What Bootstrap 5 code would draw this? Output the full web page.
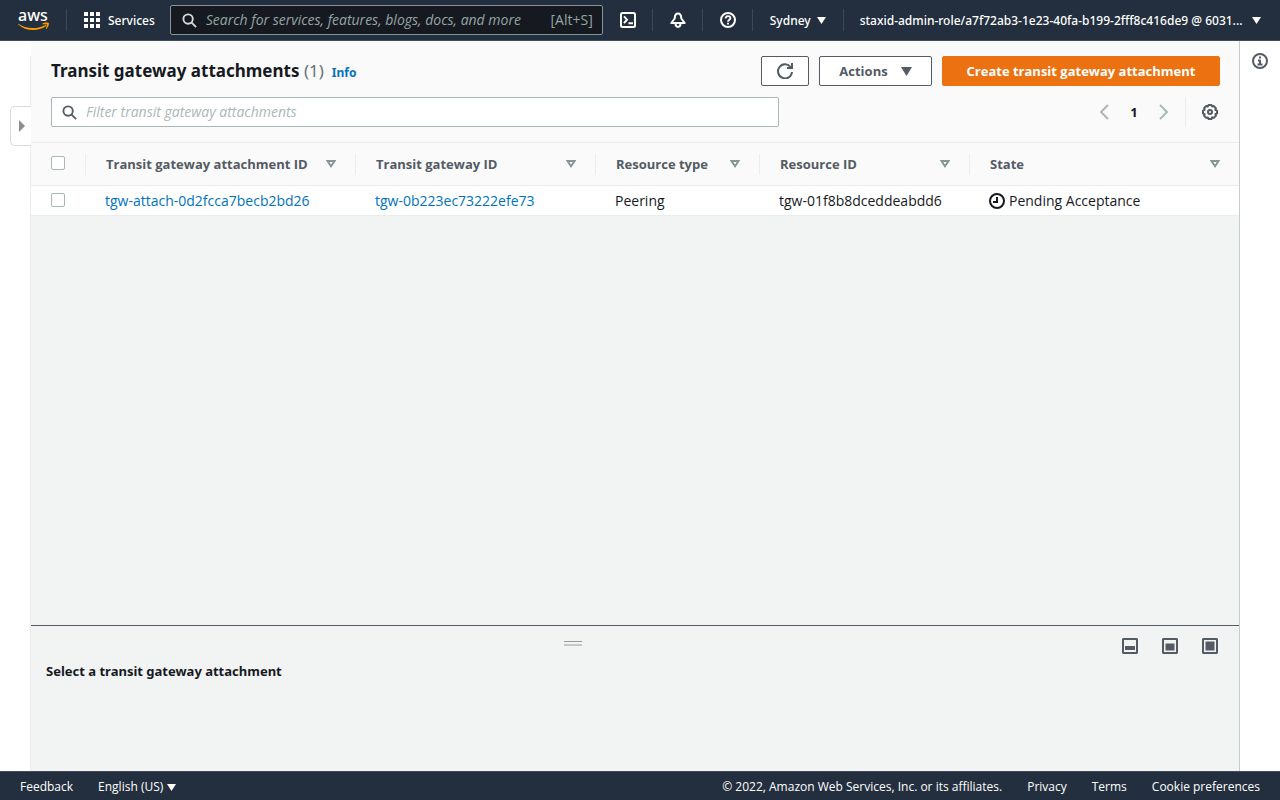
<!DOCTYPE html>
<html lang="en">
<head>
<meta charset="utf-8">
<meta name="viewport" content="width=device-width, initial-scale=1">
<title>Transit gateway attachments</title>
<link rel="stylesheet" href="https://cdn.jsdelivr.net/npm/bootstrap@5.3.0/dist/css/bootstrap.min.css">
<script src="https://cdn.jsdelivr.net/npm/bootstrap@5.3.0/dist/js/bootstrap.bundle.min.js" defer></script>
<style>
  :root { --ink: #16191f; --slate: #545b64; --line: #eaeded; --navy: #232f3e; --blue: #0073bb; }
  body { font-family: "Open Sans", "Noto Sans", sans-serif; font-size: 14px; line-height: 20px; color: var(--ink); background: #fff; }
  svg { display: block; flex: none; }
  a { text-decoration: none; }
  button { font: inherit; }
  .plain-btn { background: none; border: 0; padding: 0; color: inherit; display: flex; align-items: center; }

  .top-bar { height: 41px; background: var(--navy); border-bottom: 1px solid #414d5c; color: #fff; font-family: "Noto Sans", sans-serif; font-size: 12px; font-weight: 500; }
  .top-bar .divider { width: 1px; height: 22px; background: #414750; flex: none; }
  .top-bar .icon-cell { width: 49px; padding-left: 1px; justify-content: center; }
  .top-bar .plain-btn > span { padding-top: 2px; }
  .services-btn { margin: 0 15px 0 17px; gap: 8px; }
  .search-box { width: 433px; height: 30px; background: var(--ink); border: 1px solid #879596; border-radius: 2px; color: #95a5a6; padding: 0 9px 0 11px; font-family: "Open Sans", sans-serif; font-size: 14px; font-weight: 400; }
  .search-box input { background: none; border: 0; outline: 0; color: inherit; padding: 0 0 0 9px; min-width: 0; }
  .search-box input::placeholder { color: #95a5a6; font-style: italic; opacity: 1; }
  .region-btn { gap: 6px; margin: 0 17px; }
  .account-btn { margin: 0 19px 0 16px; }

  .left-rail { width: 31px; margin-top: 15px; padding-top: 50px; border-right: 1px solid var(--line); }
  .nav-tab { width: 21px; height: 40px; margin-left: 10px; border: 1px solid #d5dbdb; border-right: 0; border-radius: 5px 0 0 5px; background: #fff; color: #8d8d8d; padding-left: 8px; }
  .right-rail { width: 41px; border-left: 1px solid #c4cccc; padding-top: 12px; color: var(--slate); }
  .work-area { background: #f2f3f3; min-width: 0; }

  .panel-head { background: #fafafa; padding: 15px 19px 15px 20px; border-bottom: 1px solid var(--line); gap: 11px; }
  .page-title { font: 700 17px/30px "Noto Sans", sans-serif; margin: 0; }
  .page-title .count { font-weight: 400; color: #687078; }
  .info-link { font: 700 12px/20px "Noto Sans", sans-serif; color: var(--blue); }
  .tool-row { gap: 10px; }
  .tool-btn { height: 30px; border: 1px solid var(--slate); border-radius: 2px; background: #fff; color: var(--slate); font-weight: 700; font-size: 13px; display: flex; align-items: center; justify-content: center; }
  .tool-btn.refresh { width: 48px; }
  .tool-btn.actions { width: 113px; gap: 13px; }
  .tool-btn.create { width: 278px; background: #ec7211; border-color: #ec7211; color: #fff; }
  .filter-box { width: 728px; height: 30px; border: 1px solid #aab7b8; border-radius: 2px; background: #fff; color: var(--slate); padding: 0 10px; }
  .filter-box input { border: 0; outline: 0; padding: 0 0 0 9px; min-width: 0; }
  .filter-box input::placeholder { color: #aab7b8; font-style: italic; opacity: 1; }
  .pager { color: #aab7b8; gap: 16px; padding-right: 2px; }
  .pager .divider { width: 1px; height: 30px; background: var(--line); }
  .page-number { width: 18px; color: var(--ink); font-weight: 700; font-size: 13px; }

  .data-grid { table-layout: fixed; width: 100%; border-collapse: separate; border-spacing: 0; }
  .data-grid th { height: 43px; padding: 0; background: #fafafa; border-bottom: 1px solid var(--line); color: var(--slate); font-weight: 700; font-size: 13px; vertical-align: middle; }
  .data-grid td { height: 30px; padding: 0 20px; background: #fff; border-bottom: 1px solid var(--line); white-space: nowrap; vertical-align: middle; }
  .data-grid a { color: var(--blue); }
  .head-cell { height: 21px; padding: 0 19px 0 20px; border-left: 1px solid var(--line); }
  .tick { appearance: none; display: block; width: 14px; height: 14px; margin: 0 0 2px; border: 1px solid #aab7b8; border-radius: 2px; background: #fff; }
  th .tick { margin-left: 20px; }
  .tick:checked { background: var(--blue); }

  .split-panel { height: 146px; border-top: 1px solid var(--slate); padding: 12px 21px 12px 15px; color: var(--slate); }
  .split-panel h2 { font: 700 13px/20px "Noto Sans", sans-serif; color: var(--ink); margin: 7px 0 0; }
  .size-row { gap: 24px; margin-left: 22px; }
  .drag-area { padding-bottom: 6px; }
  .drag-bar { width: 18px; height: 5px; border: solid #999; border-width: 1px 0 2px; border-bottom-color: #c4c8c8; background: none; padding: 0; }

  .foot-bar { height: 29px; background: var(--navy); border-top: 1px solid #414d5c; font-size: 12px; padding: 2px 20px 0; color: #fff; }
  .foot-bar a { color: #fff; }
  .foot-links { gap: 25px; }
</style>
</head>
<body class="d-flex flex-column min-vh-100">

<header class="top-bar d-flex align-items-center flex-shrink-0">
  <a href="#" aria-label="AWS home" class="ms-3 me-3">
    <svg width="34" height="36" viewBox="0 -6 34 36"><text x="2" y="13" font-size="16" fill="#fff">aws</text><path d="M2 15.500C9.500 20.800 19.500 21.700 29 17.200c1.200-.5 1.800.4.800 1.100C22 23.800 9.500 23.500 2 16.300zM26.600 15.600c2-1.300 5.200-1.200 6.200-.6.500 1.400-.7 4.600-2.300 5.900-.6.300-.8 0-.6-.5.600-1.500 1.200-3.200.9-3.800-.4-.5-2.300-.4-3.900-.2-.5 0-.7-.4-.3-.8z" fill="#f90"/></svg>
  </a>
  <span class="divider"></span>
  <button class="plain-btn services-btn">
    <svg width="16" height="16" viewBox="0 0 16 16" fill="#fff"><path d="M0 0h4v4H0zM6 0h4v4H6zM12 0h4v4h-4zM0 6h4v4H0zM6 6h4v4H6zM12 6h4v4h-4zM0 12h4v4H0zM6 12h4v4H6zM12 12h4v4h-4z"/></svg>
    <span>Services</span>
  </button>
  <label class="search-box d-flex align-items-center">
    <svg width="15" height="15" viewBox="0 0 16 16" fill="none" stroke="#d5dbdb" stroke-width="2"><circle cx="6.500" cy="6.500" r="5"/><path d="M10 10l5 5"/></svg>
    <input class="flex-grow-1" type="text" aria-label="Search" placeholder="Search for services, features, blogs, docs, and more">
    <span>[Alt+S]</span>
  </label>
  <button class="plain-btn icon-cell" aria-label="CloudShell">
    <svg width="16" height="16" viewBox="0 0 16 16" fill="none" stroke="#fff" stroke-width="2"><rect x="1" y="1" width="14" height="14" rx="1.500"/><path d="M4 4.300l3 3.400-3 3.400M8.500 11.200H13"/></svg>
  </button>
  <span class="divider"></span>
  <button class="plain-btn icon-cell" aria-label="Notifications">
    <svg width="16" height="16" viewBox="0 0 16 16" fill="none" stroke="#fff" stroke-width="2" stroke-linejoin="round"><path d="M8 1.500C5.800 1.500 4.800 3.500 4.700 6.500L1.300 11h13.400L11.300 6.500C11.200 3.500 10.200 1.500 8 1.500zM5.500 11.500c0 4.500 5 4.500 5 0"/></svg>
  </button>
  <span class="divider"></span>
  <button class="plain-btn icon-cell" aria-label="Help">
    <svg width="16" height="16" viewBox="0 0 16 16" fill="none" stroke="#fff" stroke-width="2"><circle cx="8" cy="8" r="7"/><path d="M5.600 6.500c0-3.200 4.800-3.200 4.800-.3C10.400 7.800 8 7.800 8 9.800M8 10.800v1.800" stroke-width="1.800"/></svg>
  </button>
  <span class="divider"></span>
  <button class="plain-btn region-btn"><span>Sydney</span>
    <svg width="9" height="7" viewBox="0 0 9 7" fill="#fff"><path d="M0 0h9L4.500 7z"/></svg>
  </button>
  <span class="divider"></span>
  <button class="plain-btn account-btn flex-grow-1 justify-content-between text-nowrap"><span>staxid-admin-role/a7f72ab3-1e23-40fa-b199-2fff8c416de9 @ 6031...</span>
    <svg width="9" height="7" viewBox="0 0 9 7" fill="#fff"><path d="M0 0h9L4.500 7z"/></svg>
  </button>
</header>

<div class="d-flex flex-grow-1">
  <nav class="left-rail flex-shrink-0">
    <button class="plain-btn nav-tab" aria-label="Open navigation">
      <svg width="6" height="12" viewBox="0 0 6 12" fill="currentColor"><path d="M0 0l6 6-6 6z"/></svg>
    </button>
  </nav>

  <main class="work-area d-flex flex-column flex-grow-1">
    <div class="panel-head d-flex flex-column">
      <div class="d-flex justify-content-between">
        <div class="d-flex align-items-baseline gap-2">
          <h1 class="page-title">Transit gateway attachments <span class="count">(1)</span></h1>
          <a class="info-link" href="#">Info</a>
        </div>
        <div class="tool-row d-flex">
          <button class="tool-btn refresh" aria-label="Refresh">
            <svg width="16" height="16" viewBox="0 0 16 16" fill="none" stroke="currentColor" stroke-width="2"><path d="M15 9a7 7 0 1 1-1.500-5L15 5M15 0v5h-5"/></svg>
          </button>
          <button class="tool-btn actions">Actions
            <svg width="11" height="9" viewBox="0 0 11 9" fill="currentColor"><path d="M0 0h11L5.500 9z"/></svg>
          </button>
          <button class="tool-btn create">Create transit gateway attachment</button>
        </div>
      </div>
      <div class="d-flex justify-content-between">
        <label class="filter-box d-flex align-items-center">
          <svg width="15" height="15" viewBox="0 0 16 16" fill="none" stroke="currentColor" stroke-width="2"><circle cx="6.500" cy="6.500" r="5"/><path d="M10 10l5 5"/></svg>
          <input class="flex-grow-1" type="text" aria-label="Filter" placeholder="Filter transit gateway attachments">
        </label>
        <div class="pager d-flex align-items-center">
          <button class="plain-btn" aria-label="Previous page">
            <svg width="10" height="16" viewBox="0 0 10 16" fill="none" stroke="currentColor" stroke-width="2"><path d="M9 1L2 8l7 7"/></svg>
          </button>
          <button class="plain-btn justify-content-center page-number">1</button>
          <button class="plain-btn" aria-label="Next page">
            <svg width="10" height="16" viewBox="0 0 10 16" fill="none" stroke="currentColor" stroke-width="2"><path d="M1 1l7 7-7 7"/></svg>
          </button>
          <span class="divider"></span>
          <button class="plain-btn" aria-label="Preferences">
            <svg width="16" height="16" viewBox="0 0 16 16" fill="none" stroke="#545b64" stroke-width="2"><path d="M6.500 1h3l.6 1.500 1.600-.5 2.200 2.200-.6 1.700 1.700.7v2.900l-1.600.7.500 1.600-2.100 2.100-1.700-.6-.7 1.700H6.600l-.7-1.600-1.700.5-2.100-2.100.5-1.600L1 9.500V6.600l1.600-.7-.5-1.700L4.200 2l1.700.5z" stroke-linejoin="round"/><circle cx="8" cy="8" r="2"/></svg>
          </button>
        </div>
      </div>
    </div>

    <table class="data-grid">
      <colgroup><col style="width:54px"><col style="width:270px"><col style="width:240px"><col style="width:164px"><col style="width:210px"><col></colgroup>
      <thead>
        <tr>
          <th><input class="tick" type="checkbox" aria-label="Select all"></th>
          <th><div class="head-cell d-flex align-items-center justify-content-between">Transit gateway attachment ID <svg width="10" height="8" viewBox="0 0 10 8" fill="none" stroke="#879596" stroke-width="2"><path d="M1.500 1h7L5 6.200z"/></svg></div></th>
          <th><div class="head-cell d-flex align-items-center justify-content-between">Transit gateway ID <svg width="10" height="8" viewBox="0 0 10 8" fill="none" stroke="#879596" stroke-width="2"><path d="M1.500 1h7L5 6.200z"/></svg></div></th>
          <th><div class="head-cell d-flex align-items-center justify-content-between">Resource type <svg width="10" height="8" viewBox="0 0 10 8" fill="none" stroke="#879596" stroke-width="2"><path d="M1.500 1h7L5 6.200z"/></svg></div></th>
          <th><div class="head-cell d-flex align-items-center justify-content-between">Resource ID <svg width="10" height="8" viewBox="0 0 10 8" fill="none" stroke="#879596" stroke-width="2"><path d="M1.500 1h7L5 6.200z"/></svg></div></th>
          <th><div class="head-cell d-flex align-items-center justify-content-between">State <svg width="10" height="8" viewBox="0 0 10 8" fill="none" stroke="#879596" stroke-width="2"><path d="M1.500 1h7L5 6.200z"/></svg></div></th>
        </tr>
      </thead>
      <tbody>
        <tr>
          <td><input class="tick" type="checkbox" aria-label="Select tgw-attach-0d2fcca7becb2bd26"></td>
          <td><a href="#">tgw-attach-0d2fcca7becb2bd26</a></td>
          <td><a href="#">tgw-0b223ec73222efe73</a></td>
          <td>Peering</td>
          <td>tgw-01f8b8dceddeabdd6</td>
          <td><div class="d-flex align-items-center gap-1"><svg width="16" height="16" viewBox="0 0 16 16" fill="none" stroke="#16191f" stroke-width="2"><circle cx="8" cy="8" r="7"/><path d="M8 4v5H4"/></svg>Pending Acceptance</div></td>
        </tr>
      </tbody>
    </table>

    <section class="split-panel mt-auto">
      <div class="d-flex align-items-center">
        <div class="drag-area d-flex flex-grow-1 justify-content-center"><button class="drag-bar" aria-label="Resize panel"></button></div>
        <div class="size-row d-flex">
          <button class="plain-btn" aria-label="Small panel"><svg width="16" height="16" viewBox="0 0 16 16" fill="#545b64"><path d="M1 0h14l1 1v14l-1 1H1l-1-1V1zM2 2v12h12V2z" fill-rule="evenodd"/><path d="M3 8h10v4H3z"/></svg></button>
          <button class="plain-btn" aria-label="Medium panel"><svg width="16" height="16" viewBox="0 0 16 16" fill="#545b64"><path d="M1 0h14l1 1v14l-1 1H1l-1-1V1zM2 2v12h12V2z" fill-rule="evenodd"/><path d="M3.500 5.500h9v7h-9z"/></svg></button>
          <button class="plain-btn" aria-label="Full panel"><svg width="16" height="16" viewBox="0 0 16 16" fill="#545b64"><path d="M1 0h14l1 1v14l-1 1H1l-1-1V1zM2 2v12h12V2z" fill-rule="evenodd"/><path d="M3.500 3.500h9v9h-9z"/></svg></button>
        </div>
      </div>
      <h2>Select a transit gateway attachment</h2>
    </section>
  </main>

  <aside class="right-rail flex-shrink-0">
    <button class="plain-btn mx-auto" aria-label="Information">
      <svg width="16" height="16" viewBox="0 0 16 16" fill="none" stroke="currentColor"><circle cx="8" cy="8" r="7" stroke-width="2"/><path d="M7 4.500h2M6 7.500h2.500M5.500 11.500h5M8 7v4" stroke-width="2"/></svg>
    </button>
  </aside>
</div>

<footer class="foot-bar d-flex align-items-center justify-content-between flex-shrink-0">
  <div class="d-flex foot-links">
    <a href="#">Feedback</a>
    <button class="plain-btn gap-1"><span>English (US)</span>
      <svg width="9" height="7" viewBox="0 0 9 7" fill="#fff"><path d="M0 0h9L4.500 7z"/></svg>
    </button>
  </div>
  <div class="d-flex foot-links">
    <span>© 2022, Amazon Web Services, Inc. or its affiliates.</span>
    <a href="#">Privacy</a>
    <a href="#">Terms</a>
    <a href="#">Cookie preferences</a>
  </div>
</footer>
</body>
</html>
